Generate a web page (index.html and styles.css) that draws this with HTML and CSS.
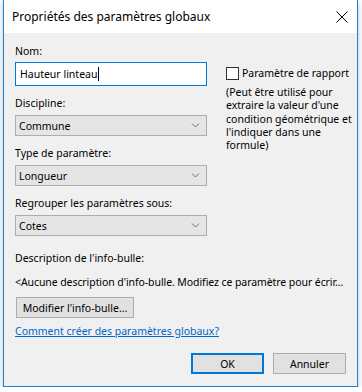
FILE: index.html
```html
<!DOCTYPE html>
<html lang="fr">
<head>
    <meta charset="UTF-8">
    <title>Propriétés des paramètres globaux</title>
    <link rel="stylesheet" href="styles.css">
</head>
<body>
    <div class="window">
        <div class="titlebar">
            <span class="title">Propriétés des paramètres globaux</span>
            <svg class="close" width="12" height="12" viewBox="0 0 12 12">
                <path d="M0.5 0.5 L11.5 11.5 M11.5 0.5 L0.5 11.5" stroke="#000" stroke-width="1" fill="none"/>
            </svg>
        </div>
        <div class="content">
            <div class="top">
                <div class="fields">
                    <div class="label">Nom:</div>
                    <div class="textbox">Hauteur linteau<span class="caret"></span></div>

                    <div class="label gap">Discipline:</div>
                    <div class="select">Commune
                        <svg class="chevron" width="9" height="5" viewBox="0 0 9 5"><path d="M1 0.5 L4.5 4 L8 0.5" stroke="#707070" fill="none"/></svg>
                    </div>

                    <div class="label gap">Type de paramètre:</div>
                    <div class="select">Longueur
                        <svg class="chevron" width="9" height="5" viewBox="0 0 9 5"><path d="M1 0.5 L4.5 4 L8 0.5" stroke="#707070" fill="none"/></svg>
                    </div>

                    <div class="label gap">Regrouper les paramètres sous:</div>
                    <div class="select">Cotes
                        <svg class="chevron" width="9" height="5" viewBox="0 0 9 5"><path d="M1 0.5 L4.5 4 L8 0.5" stroke="#707070" fill="none"/></svg>
                    </div>
                </div>
                <div class="side">
                    <div class="check"><span class="box"></span>Paramètre de rapport</div>
                    <p class="note">(Peut être utilisé pour<br>extraire la valeur d'une<br>condition géométrique et<br>l'indiquer dans une<br>formule)</p>
                </div>
            </div>

            <div class="label desc-label">Description de l'info-bulle:</div>
            <div class="desc">&lt;Aucune description d'info-bulle. Modifiez ce paramètre pour écrir…</div>
            <button class="btn edit">Modifier l'info-bulle...</button>
            <a class="link" href="#">Comment créer des paramètres globaux?</a>

            <div class="footer">
                <button class="btn ok">OK</button>
                <button class="btn">Annuler</button>
            </div>
        </div>
    </div>
</body>
</html>
```

FILE: styles.css
```css
body {
    margin: 0;
    background-color: #ffffff;
    font-family: "Noto Sans", "Open Sans", sans-serif;
    font-size: 10.5px;
    color: #000000;
}
.window {
    margin-left: 3px;
    width: 355px;
    height: 387px;
    box-sizing: border-box;
    border: 1px solid #1883d7;
    border-top: none;
    background-color: #f0f0f0;
    box-shadow: 0 2px 6px rgba(0, 0, 0, 0.25);
    display: flex;
    flex-direction: column;
}
.titlebar {
    height: 33px;
    background-color: #ffffff;
    display: flex;
    align-items: center;
    justify-content: space-between;
    padding: 0 9px 0 8px;
}
.title {
    font-size: 12px;
}
.content {
    padding: 11px 11px 0 11px;
    display: flex;
    flex-direction: column;
    flex: 1;
}
.top {
    display: flex;
}
.fields {
    width: 192px;
    flex-shrink: 0;
    display: flex;
    flex-direction: column;
}
.side {
    margin-left: 19px;
    padding-top: 22px;
    white-space: nowrap;
}
.label {
    line-height: 15px;
}
.label.gap {
    margin-top: 10px;
}
.textbox {
    margin-top: 3px;
    height: 24px;
    box-sizing: border-box;
    border: 1px solid #0078d7;
    background-color: #ffffff;
    padding: 0 4px;
    display: flex;
    align-items: center;
}
.caret {
    width: 1px;
    height: 14px;
    background-color: #000;
    margin-left: 1px;
}
.select {
    margin-top: 4px;
    height: 21px;
    box-sizing: border-box;
    border: 1px solid #adadad;
    background-color: #e5e5e5;
    padding: 0 6px 0 3px;
    display: flex;
    align-items: center;
    justify-content: space-between;
}
.check {
    display: flex;
    align-items: center;
    line-height: 15px;
}
.box {
    width: 13px;
    height: 13px;
    box-sizing: border-box;
    border: 1px solid #333333;
    background-color: #ffffff;
    margin-right: 3px;
}
.note {
    margin: 5px 0 0 0;
    line-height: 13.3px;
}
.desc-label {
    margin-top: 15px;
}
.desc {
    margin-top: 9px;
    line-height: 15px;
    white-space: nowrap;
    letter-spacing: -0.08px;
}
.btn {
    font-family: inherit;
    font-size: 10.5px;
    height: 21px;
    border: 1px solid #adadad;
    background-color: #e1e1e1;
    padding: 0;
    color: #000;
}
.edit {
    margin-top: 7px;
    width: 118px;
    margin-left: 1px;
}
.link {
    margin-top: 6px;
    color: #0066cc;
    line-height: 15px;
    align-self: flex-start;
}
.footer {
    margin-top: auto;
    margin-bottom: 12px;
    display: flex;
    justify-content: flex-end;
    gap: 9px;
}
.footer .btn {
    width: 73px;
}
.ok {
    border: 2px solid #0078d7;
}
```
